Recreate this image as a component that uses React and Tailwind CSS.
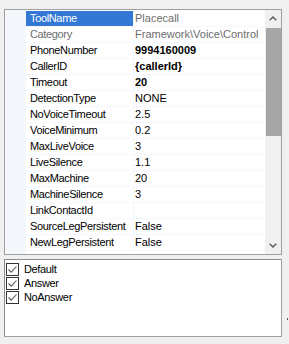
import React from "react";

const rows = [
  { name: "ToolName", value: "Placecall", selected: true, grayValue: true },
  { name: "Category", value: "Framework\\Voice\\Control", grayName: true, grayValue: true },
  { name: "PhoneNumber", value: "9994160009", bold: true },
  { name: "CallerID", value: "{callerId}", bold: true },
  { name: "Timeout", value: "20", bold: true },
  { name: "DetectionType", value: "NONE" },
  { name: "NoVoiceTimeout", value: "2.5" },
  { name: "VoiceMinimum", value: "0.2" },
  { name: "MaxLiveVoice", value: "3" },
  { name: "LiveSilence", value: "1.1" },
  { name: "MaxMachine", value: "20" },
  { name: "MachineSilence", value: "3" },
  { name: "LinkContactId", value: "" },
  { name: "SourceLegPersistent", value: "False" },
  { name: "NewLegPersistent", value: "False" },
];

const items = ["Default", "Answer", "NoAnswer"];

function Chevron({ down }) {
  return (
    <svg width="8" height="5" viewBox="0 0 8 5">
      <path
        d={down ? "M0.7 0.7 L4 4 L7.3 0.7" : "M0.7 4.3 L4 1 L7.3 4.3"}
        fill="none"
        stroke="#606060"
        strokeWidth="1.5"
      />
    </svg>
  );
}

function Check() {
  return (
    <div className="w-[13px] h-[13px] border border-[#333333] bg-white flex items-center justify-center shrink-0">
      <svg width="11" height="11" viewBox="0 0 11 11">
        <path d="M1.5 5.5 L4.2 8.2 L9.5 2.5" fill="none" stroke="#5a5a5a" strokeWidth="1.1" />
      </svg>
    </div>
  );
}

export default function App() {
  return (
    <div className="w-[289px] h-[344px] bg-[#f0f0f0] font-['Liberation_Sans',Arial,sans-serif] text-[11px] text-black leading-none overflow-hidden">
      <div className="pt-[9px] pl-[4px]">
        <div className="w-[278px] h-[246px] border border-[#a0a0a0] bg-white flex">
          <div className="w-[21px] bg-[#f4f7fc]" />
          <div className="w-[239px] flex flex-col pt-[1px]">
            {rows.map((r) => (
              <div key={r.name} className="h-[16px] flex border-b border-[#f4f7fc]">
                <div
                  className={
                    "w-[107px] h-[15px] flex items-center pl-[4px] tracking-[-0.35px] whitespace-nowrap " +
                    (r.selected ? "bg-[#3378d5] text-white" : r.grayName ? "text-[#6d6d6d]" : "text-black")
                  }
                >
                  {r.name}
                </div>
                <div className="w-[1px] bg-[#f4f7fc]" />
                <div
                  className={
                    "flex-1 h-[15px] flex items-center pl-[1px] whitespace-nowrap " +
                    (r.bold ? "font-bold " : "") +
                    (r.grayValue ? "text-[#6d6d6d]" : "text-black")
                  }
                >
                  {r.value}
                </div>
              </div>
            ))}
          </div>
          <div className="w-[16px] bg-[#f0f0f0] flex flex-col">
            <div className="h-[17px] flex items-center justify-center">
              <Chevron />
            </div>
            <div className="flex-1 pl-[1px]">
              <div className="mt-[1px] h-[108px] bg-[#a6a6a6]" />
            </div>
            <div className="h-[17px] flex items-center justify-center">
              <Chevron down />
            </div>
          </div>
        </div>
        <div className="flex mt-[4px]">
          <div className="w-[278px] h-[78px] border border-[#8c8c8c] border-r-[#a0a0a0] border-b-[#a0a0a0] bg-white pt-[2px] pl-[1px] flex flex-col">
            {items.map((t) => (
              <div key={t} className="h-[14px] flex items-center gap-[5px]">
                <Check />
                <span className="tracking-[-0.35px]">{t}</span>
              </div>
            ))}
          </div>
          <div className="self-end mb-[17px] ml-[5px] w-[1px] h-[2px] bg-[#555555]" />
        </div>
      </div>
    </div>
  );
}
